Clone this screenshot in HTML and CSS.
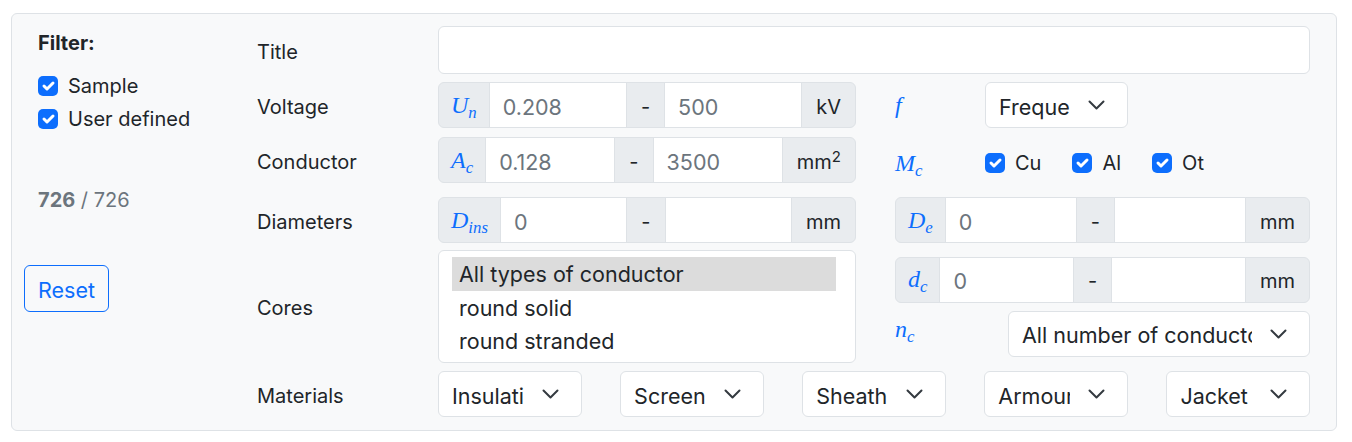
FILE: index.html
```html
<!DOCTYPE html>
<html lang="en">
<head>
    <meta charset="UTF-8">
    <meta name="viewport" content="width=device-width, initial-scale=1.0">
    <title>Cable filter</title>
    <link rel="stylesheet" href="styles.css">
</head>
<body>
    <div class="card">
        <aside class="side">
            <div class="filter-title">Filter:</div>
            <label class="check">
                <span class="box"><svg width="20" height="20" viewBox="0 0 20 20"><path d="M6 10l3 3 6-6" fill="none" stroke="#fff" stroke-width="3" stroke-linecap="round" stroke-linejoin="round"/></svg></span>
                Sample
            </label>
            <label class="check">
                <span class="box"><svg width="20" height="20" viewBox="0 0 20 20"><path d="M6 10l3 3 6-6" fill="none" stroke="#fff" stroke-width="3" stroke-linecap="round" stroke-linejoin="round"/></svg></span>
                User defined
            </label>
            <div class="count"><b>726</b> / 726</div>
            <button type="button" class="btn-reset">Reset</button>
        </aside>

        <div class="fields">
            <div class="row row-title">
                <div class="label">Title</div>
                <input type="text" class="control title-input">
            </div>

            <div class="row row-voltage">
                <div class="label">Voltage</div>
                <div class="split">
                    <div class="group">
                        <span class="addon addon-math"><span class="math">U<sub>n</sub></span></span>
                        <input type="text" class="num" value="0.208">
                        <span class="addon">-</span>
                        <input type="text" class="num" value="500">
                        <span class="addon">kV</span>
                    </div>
                    <div class="aux">
                        <span class="math">f</span>
                        <div class="select select-small">
                            <span class="select-text">Frequency</span>
                            <svg class="chev" width="17" height="10" viewBox="0 0 17 10"><path d="M1.5 1.5l7 7 7-7" fill="none" stroke="#343a40" stroke-width="2" stroke-linecap="round" stroke-linejoin="round"/></svg>
                        </div>
                    </div>
                </div>
            </div>

            <div class="row row-conductor">
                <div class="label">Conductor</div>
                <div class="split">
                    <div class="group">
                        <span class="addon addon-math"><span class="math">A<sub>c</sub></span></span>
                        <input type="text" class="num" value="0.128">
                        <span class="addon">-</span>
                        <input type="text" class="num" value="3500">
                        <span class="addon"><span>mm<sup>2</sup></span></span>
                    </div>
                    <div class="aux">
                        <span class="math math-low">M<sub>c</sub></span>
                        <div class="checks">
                            <label class="check inline">
                                <span class="box"><svg width="20" height="20" viewBox="0 0 20 20"><path d="M6 10l3 3 6-6" fill="none" stroke="#fff" stroke-width="3" stroke-linecap="round" stroke-linejoin="round"/></svg></span>
                                Cu
                            </label>
                            <label class="check inline">
                                <span class="box"><svg width="20" height="20" viewBox="0 0 20 20"><path d="M6 10l3 3 6-6" fill="none" stroke="#fff" stroke-width="3" stroke-linecap="round" stroke-linejoin="round"/></svg></span>
                                Al
                            </label>
                            <label class="check inline">
                                <span class="box"><svg width="20" height="20" viewBox="0 0 20 20"><path d="M6 10l3 3 6-6" fill="none" stroke="#fff" stroke-width="3" stroke-linecap="round" stroke-linejoin="round"/></svg></span>
                                Ot
                            </label>
                        </div>
                    </div>
                </div>
            </div>

            <div class="row row-diameters">
                <div class="label">Diameters</div>
                <div class="split">
                    <div class="group">
                        <span class="addon addon-math"><span class="math">D<sub>ins</sub></span></span>
                        <input type="text" class="num" value="0">
                        <span class="addon">-</span>
                        <input type="text" class="num" value="">
                        <span class="addon">mm</span>
                    </div>
                    <div class="group">
                        <span class="addon addon-math"><span class="math">D<sub>e</sub></span></span>
                        <input type="text" class="num" value="0">
                        <span class="addon">-</span>
                        <input type="text" class="num" value="">
                        <span class="addon">mm</span>
                    </div>
                </div>
            </div>

            <div class="row row-cores">
                <div class="label">Cores</div>
                <div class="split">
                    <div class="listbox">
                        <div class="option selected">All types of conductor</div>
                        <div class="option">round solid</div>
                        <div class="option">round stranded</div>
                    </div>
                    <div class="stack">
                        <div class="group">
                            <span class="addon addon-math"><span class="math">d<sub>c</sub></span></span>
                            <input type="text" class="num" value="0">
                            <span class="addon">-</span>
                            <input type="text" class="num" value="">
                            <span class="addon">mm</span>
                        </div>
                        <div class="nc-row">
                            <span class="math math-high">n<sub>c</sub></span>
                            <div class="select select-wide">
                                <span class="select-text">All number of conductors</span>
                                <svg class="chev" width="17" height="10" viewBox="0 0 17 10"><path d="M1.5 1.5l7 7 7-7" fill="none" stroke="#343a40" stroke-width="2" stroke-linecap="round" stroke-linejoin="round"/></svg>
                            </div>
                        </div>
                    </div>
                </div>
            </div>

            <div class="row row-materials">
                <div class="label">Materials</div>
                <div class="materials">
                    <div class="select">
                        <span class="select-text">Insulation</span>
                        <svg class="chev" width="17" height="10" viewBox="0 0 17 10"><path d="M1.5 1.5l7 7 7-7" fill="none" stroke="#343a40" stroke-width="2" stroke-linecap="round" stroke-linejoin="round"/></svg>
                    </div>
                    <div class="select">
                        <span class="select-text">Screen</span>
                        <svg class="chev" width="17" height="10" viewBox="0 0 17 10"><path d="M1.5 1.5l7 7 7-7" fill="none" stroke="#343a40" stroke-width="2" stroke-linecap="round" stroke-linejoin="round"/></svg>
                    </div>
                    <div class="select">
                        <span class="select-text">Sheath</span>
                        <svg class="chev" width="17" height="10" viewBox="0 0 17 10"><path d="M1.5 1.5l7 7 7-7" fill="none" stroke="#343a40" stroke-width="2" stroke-linecap="round" stroke-linejoin="round"/></svg>
                    </div>
                    <div class="select">
                        <span class="select-text">Armour</span>
                        <svg class="chev" width="17" height="10" viewBox="0 0 17 10"><path d="M1.5 1.5l7 7 7-7" fill="none" stroke="#343a40" stroke-width="2" stroke-linecap="round" stroke-linejoin="round"/></svg>
                    </div>
                    <div class="select">
                        <span class="select-text">Jacket</span>
                        <svg class="chev" width="17" height="10" viewBox="0 0 17 10"><path d="M1.5 1.5l7 7 7-7" fill="none" stroke="#343a40" stroke-width="2" stroke-linecap="round" stroke-linejoin="round"/></svg>
                    </div>
                </div>
            </div>
        </div>
    </div>
</body>
</html>
```

FILE: styles.css
```css
* {
    box-sizing: border-box;
}
body {
    margin: 0;
    font-family: Inter, "Noto Sans", sans-serif;
    font-size: 20px;
    color: #212529;
    background: #fff;
}
.card {
    display: flex;
    margin: 13px 15px 0 11px;
    padding: 12px 26px 13px 0;
    background: #f8f9fa;
    border: 1px solid #dee2e6;
    border-radius: 6px;
}

/* left column */
.side {
    width: 245px;
    flex-shrink: 0;
    padding-left: 12px;
}
.filter-title {
    margin: 2px 0 13px 14px;
    line-height: 30px;
    font-weight: 700;
}
.check {
    display: flex;
    align-items: center;
    gap: 10px;
    height: 30px;
    margin: 0 0 2.5px 14px;
}
.box {
    display: flex;
    width: 20px;
    height: 20px;
    border-radius: 5px;
    background: #0d6efd;
}
.count {
    margin: 51px 0 0 14px;
    line-height: 30px;
    color: #6c757d;
}
.count b {
    font-weight: 700;
}
.btn-reset {
    margin-top: 50px;
    padding: 9px 13px 6px;
    font-family: inherit;
    font-size: 21.5px;
    line-height: 30px;
    color: #0d6efd;
    background: transparent;
    border: 1px solid #0d6efd;
    border-radius: 6px;
}

/* form rows */
.fields {
    flex: 1;
    min-width: 0;
}
.row {
    display: grid;
    grid-template-columns: 181px minmax(0, 1fr);
    align-items: center;
}
.label {
    padding-top: 3px;
}
.row-voltage { margin-top: 8px; }
.row-conductor { margin-top: 9px; }
.row-diameters { margin-top: 14px; }
.row-cores { margin-top: 7px; }
.row-materials { margin-top: 8px; }

.control {
    width: 100%;
    height: 48px;
    padding: 2px 13px 0;
    font-family: inherit;
    font-size: 21.5px;
    color: #6c757d;
    background: #fff;
    border: 1px solid #dee2e6;
    border-radius: 6px;
}
.split {
    display: grid;
    grid-template-columns: 418px minmax(0, 1fr);
    column-gap: 39px;
    align-items: center;
}

/* input groups */
.group {
    display: flex;
    height: 46px;
    min-width: 0;
}
.addon {
    display: flex;
    align-items: center;
    padding: 3px 14px 0;
    background: #e9ecef;
    border: 1px solid #dee2e6;
    white-space: nowrap;
}
.addon sup {
    font-size: 0.75em;
    line-height: 0;
    vertical-align: 0.5em;
}
.group > * + * {
    margin-left: -1px;
}
.group > :first-child {
    border-radius: 6px 0 0 6px;
}
.group > :last-child {
    border-radius: 0 6px 6px 0;
}
.num {
    flex: 1;
    width: 0;
    min-width: 0;
    padding: 3px 13px 0;
    font-family: inherit;
    font-size: 21.5px;
    color: #6c757d;
    background: #fff;
    border: 1px solid #dee2e6;
}
.math {
    font-family: "Liberation Serif", "Times New Roman", serif;
    font-style: italic;
    font-size: 24px;
    color: #0d6efd;
}
.addon-math {
    padding: 0 12px;
}
.math sub {
    font-size: 0.7em;
    line-height: 0;
    vertical-align: -0.3em;
}
.math-low {
    margin-top: 6px;
}
.math-high {
    margin-top: -8px;
}

/* right hand helpers */
.aux {
    display: grid;
    grid-template-columns: 90px auto;
    align-items: center;
    justify-items: start;
}
.checks {
    display: flex;
    gap: 31px;
    margin-top: 6px;
}
.check.inline {
    margin: 0;
}
.stack {
    display: flex;
    flex-direction: column;
    gap: 8px;
    min-width: 0;
}
.nc-row {
    display: flex;
    align-items: center;
    justify-content: space-between;
}

/* select look-alikes */
.select {
    display: flex;
    align-items: center;
    height: 46px;
    min-width: 0;
    padding: 0 22px 0 13px;
    font-size: 21.5px;
    background: #fff;
    border: 1px solid #dee2e6;
    border-radius: 6px;
}
.select-text {
    flex: 1;
    min-width: 0;
    padding-top: 3px;
    overflow: hidden;
    white-space: nowrap;
}
.chev {
    flex-shrink: 0;
    margin-left: 18px;
}
.select-small {
    width: 143px;
}
.select-wide {
    width: 302px;
}
.materials {
    display: grid;
    grid-template-columns: repeat(5, minmax(0, 1fr));
    column-gap: 38.5px;
}

/* list box */
.listbox {
    height: 113px;
    padding: 6px 19px 6px 13px;
    font-size: 21.5px;
    background: #fff;
    border: 1px solid #dee2e6;
    border-radius: 6px;
}
.option {
    height: 33.5px;
    padding: 2px 0 0 7px;
    line-height: 31.5px;
}
.option.selected {
    background: #dcdcdc;
}
```
